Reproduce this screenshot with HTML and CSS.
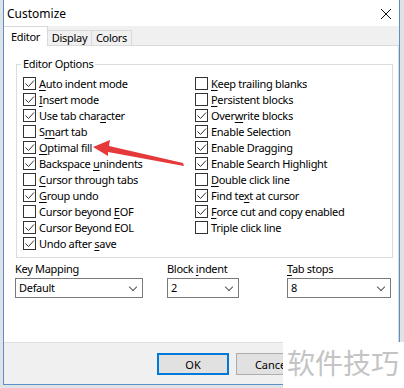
FILE: index.html
```html
<!DOCTYPE html>
<html lang="en">
<head>
    <meta charset="UTF-8">
    <title>Customize</title>
    <link rel="stylesheet" href="styles.css">
</head>
<body>
    <div class="window">
        <div class="titlebar">
            <span class="title">Customize</span>
            <svg class="close" width="12" height="12" viewBox="0 0 12 12">
                <path d="M1 1 L11 11 M11 1 L1 11" stroke="#111" stroke-width="1" fill="none"/>
            </svg>
        </div>

        <div class="tabs">
            <div class="tab active">Editor</div>
            <div class="tab">Display</div>
            <div class="tab">Colors</div>
        </div>

        <div class="page">
            <div class="group">
                <span class="legend">Editor Options</span>
                <div class="cols">
                    <div class="col left">
                        <div class="opt"><span class="box on"></span><span><u>A</u>uto indent mode</span></div>
                        <div class="opt"><span class="box on"></span><span><u>I</u>nsert mode</span></div>
                        <div class="opt"><span class="box on"></span><span>Use tab char<u>a</u>cter</span></div>
                        <div class="opt"><span class="box"></span><span>S<u>m</u>art tab</span></div>
                        <div class="opt"><span class="box on"></span><span><u>O</u>ptimal fill</span></div>
                        <div class="opt"><span class="box on"></span><span>Backspace <u>u</u>nindents</span></div>
                        <div class="opt"><span class="box"></span><span><u>C</u>ursor through tabs</span></div>
                        <div class="opt"><span class="box on"></span><span><u>G</u>roup undo</span></div>
                        <div class="opt"><span class="box"></span><span>Cursor beyond <u>E</u>OF</span></div>
                        <div class="opt"><span class="box on"></span><span>Cursor Beyond EOL</span></div>
                        <div class="opt"><span class="box on"></span><span>Undo after <u>s</u>ave</span></div>
                    </div>
                    <div class="col">
                        <div class="opt"><span class="box"></span><span><u>K</u>eep trailing blanks</span></div>
                        <div class="opt"><span class="box"></span><span><u>P</u>ersistent blocks</span></div>
                        <div class="opt"><span class="box on"></span><span>Over<u>w</u>rite blocks</span></div>
                        <div class="opt"><span class="box on"></span><span>Enable Selection</span></div>
                        <div class="opt"><span class="box on"></span><span>Enable Dragging</span></div>
                        <div class="opt"><span class="box on"></span><span>Enable Search Highlight</span></div>
                        <div class="opt"><span class="box"></span><span><u>D</u>ouble click line</span></div>
                        <div class="opt"><span class="box on"></span><span>Find te<u>x</u>t at cursor</span></div>
                        <div class="opt"><span class="box on"></span><span><u>F</u>orce cut and copy enabled</span></div>
                        <div class="opt"><span class="box"></span><span>Triple click line</span></div>
                    </div>
                </div>
            </div>

            <div class="fields">
                <div class="field key">
                    <div class="field-label">Key Mapping</div>
                    <div class="combo"><span>Default</span><span class="chev"></span></div>
                </div>
                <div class="field indent">
                    <div class="field-label">Block <u>i</u>ndent</div>
                    <div class="combo"><span>2</span><span class="chev"></span></div>
                </div>
                <div class="field stops">
                    <div class="field-label"><u>T</u>ab stops</div>
                    <div class="combo"><span>8</span><span class="chev"></span></div>
                </div>
            </div>
        </div>

        <div class="buttons">
            <button class="btn default">OK</button>
            <button class="btn">Cancel</button>
        </div>
    </div>

    <!-- red annotation arrow drawn over the dialog -->
    <svg class="arrow" width="404" height="388" viewBox="0 0 404 388">
        <polygon points="93,147 110,140 109,146 183,163 184,166 108,152 108,156" fill="#e5393a"/>
    </svg>

    <div class="watermark">软件技巧</div>
</body>
</html>
```

FILE: styles.css
```css
body {
    margin: 0;
    width: 404px;
    height: 388px;
    overflow: hidden;
    background: #dfe2e6;
    font-family: "Noto Sans", "Liberation Sans", sans-serif;
    font-size: 11px;
    letter-spacing: -0.3px;
    color: #000;
    position: relative;
}
.window {
    margin-left: 3px;
    width: 395px;
    border: 1px solid #5b8fc7;
    border-top: none;
    background: #f0f0f0;
}
.titlebar {
    height: 26px;
    background: #fff;
    display: flex;
    align-items: center;
    justify-content: space-between;
    padding: 0 7px 0 3px;
}
.title {
    font-size: 12px;
    letter-spacing: 0;
}
.close {
    margin-top: 1px;
}
.tabs {
    height: 19px;
    display: flex;
    align-items: flex-end;
}
.tab {
    height: 14px;
    line-height: 13px;
    width: 43px;
    text-align: center;
    border: 1px solid #d9d9d9;
    border-bottom: none;
    border-left: none;
    background: #f0f0f0;
}
.tab:last-child {
    width: 39px;
}
.tab.active {
    height: 19px;
    line-height: 19px;
    width: 43px;
    background: #fff;
    margin-bottom: -1px;
    position: relative;
}
.page {
    height: 296px;
    background: #fff;
    border-top: 1px solid #d9d9d9;
    border-right: 1px solid #dadada;
}
.group {
    position: relative;
    margin: 18px 0 0 12px;
    width: 375px;
    height: 192px;
    border: 1px solid #dcdcdc;
}
.legend {
    position: absolute;
    left: 4px;
    top: -9px;
    padding: 0 2px;
    background: #fff;
    line-height: 16px;
}
.cols {
    display: flex;
    padding: 10px 0 0 6px;
}
.col.left {
    width: 172px;
}
.opt {
    height: 16px;
    display: flex;
    align-items: center;
    white-space: nowrap;
}
.box {
    width: 11px;
    height: 11px;
    border: 1px solid #333;
    margin-right: 3px;
    flex: none;
    background: #fff;
}
.box.on {
    background: #fff url("data:image/svg+xml;utf8,<svg xmlns='http://www.w3.org/2000/svg' width='11' height='11'><polyline points='1.5,5.5 4.5,8.5 10,2.5' fill='none' stroke='%23333' stroke-width='1'/></svg>") no-repeat;
}
u {
    text-decoration-thickness: 1px;
    text-underline-offset: 2px;
}
.fields {
    display: flex;
    margin: 3px 0 0 11px;
}
.field-label {
    line-height: 16px;
    margin-bottom: 1px;
}
.field.key {
    width: 128px;
    margin-right: 24px;
}
.field.indent {
    width: 72px;
    margin-right: 48px;
}
.field.stops {
    width: 104px;
}
.combo {
    height: 18px;
    border: 1px solid #7a7a7a;
    background: #fff;
    line-height: 18px;
    padding-left: 3px;
    display: flex;
    justify-content: space-between;
    align-items: center;
}
.chev {
    width: 5px;
    height: 5px;
    border-right: 1px solid #555;
    border-bottom: 1px solid #555;
    transform: rotate(45deg);
    margin: -3px 6px 0 0;
}
.buttons {
    height: 31px;
    border-top: 1px solid #dfdfdf;
    padding: 10px 0 0 153px;
    display: flex;
    gap: 7px;
}
.btn {
    width: 72px;
    height: 22px;
    font-family: inherit;
    font-size: 11px;
    background: #e1e1e1;
    border: 1px solid #adadad;
    padding: 0;
}
.btn.default {
    border: 2px solid #0078d7;
}
.arrow {
    position: absolute;
    left: 0;
    top: 0;
    pointer-events: none;
}
.watermark {
    position: absolute;
    left: 283px;
    top: 342px;
    width: 121px;
    height: 46px;
    background: #fff;
    color: #c4c4c4;
    font-family: "Noto Sans CJK SC", sans-serif;
    font-size: 28px;
    letter-spacing: 0;
    line-height: 40px;
    padding-left: 4px;
    box-sizing: border-box;
}
```
